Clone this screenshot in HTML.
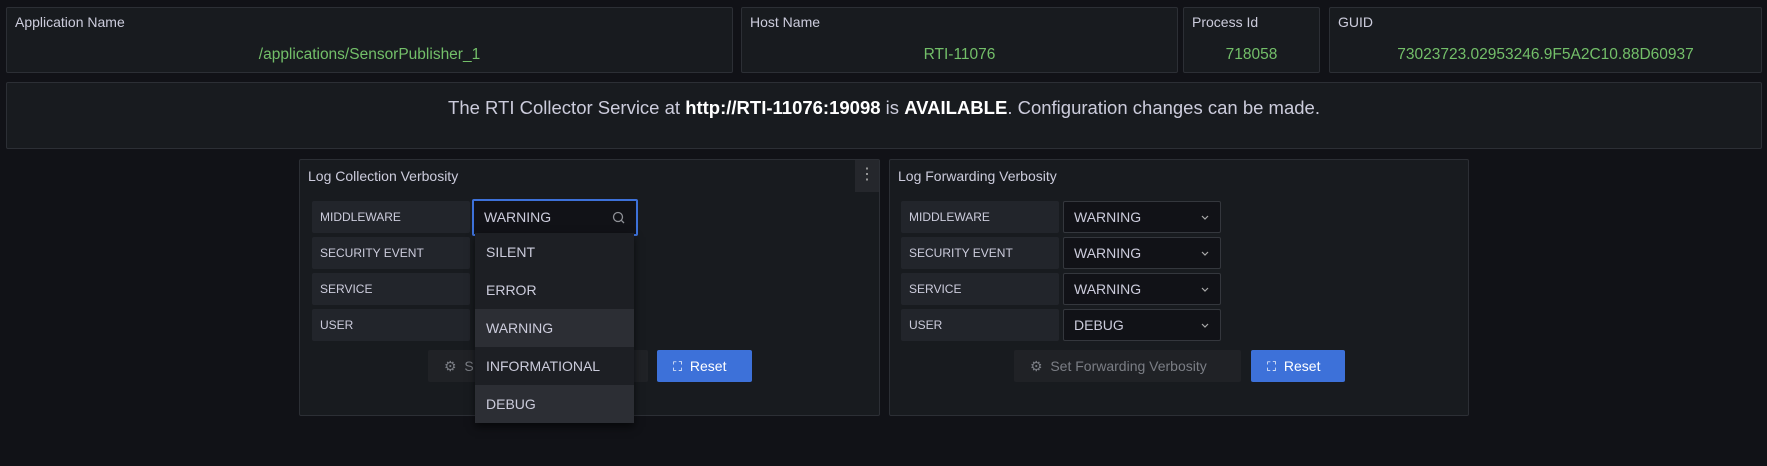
<!DOCTYPE html>
<html><head><meta charset="utf-8"><style>
*{box-sizing:border-box;margin:0;padding:0}
body{width:1767px;height:466px;background:#111217;font-family:"Liberation Sans",sans-serif;color:#ccccdc;position:relative;overflow:hidden}
.p{position:absolute;background:#181b1f;border:1px solid #2c2f35;border-radius:2px}
.t{position:absolute;left:8px;top:6px;font-size:14px;color:#ccccdc;font-weight:500}
.v{position:absolute;left:0;right:0;top:38px;text-align:center;color:#73bf69;font-size:15.5px}
.lab{position:absolute;background:#22252b;border-radius:2px;font-size:12px;color:#ccccdc;padding-left:8px;line-height:32px;width:158px;height:32px}
.sel{position:absolute;background:#111217;border:1px solid #34373d;border-radius:2px;height:32px;width:158px;font-size:14px;color:#ccccdc;padding-left:10px;line-height:30px}
.sel svg{position:absolute;right:10px;top:10px}
.btn{position:absolute;height:32px;border-radius:2px;font-size:14px;line-height:32px}
.g{background:#202226;color:#7b7e85}
.b{background:#3d71d9;color:#fff}
.menu{position:absolute;left:475px;top:233px;width:159px;height:190px;background:#1d1f24;box-shadow:0 4px 8px rgba(0,0,0,.6)}
.mi{height:38px;line-height:38px;padding-left:11px;font-size:14px;color:#ccccdc}
.hi{background:#2c2e34}
</style></head><body>
<div class="p" style="left:6px;top:7px;width:727px;height:66px"><div class="t">Application Name</div><div class="v">/applications/SensorPublisher_1</div></div>
<div class="p" style="left:741px;top:7px;width:437px;height:66px"><div class="t">Host Name</div><div class="v">RTI-11076</div></div>
<div class="p" style="left:1183px;top:7px;width:137px;height:66px"><div class="t">Process Id</div><div class="v">718058</div></div>
<div class="p" style="left:1329px;top:7px;width:433px;height:66px"><div class="t">GUID</div><div class="v">73023723.02953246.9F5A2C10.88D60937</div></div>
<div class="p" style="left:6px;top:82px;width:1756px;height:67px"><div style="position:absolute;left:0;right:0;top:14px;text-align:center;font-size:18.5px;color:#ccccdc">The RTI Collector Service at <b style="color:#fff">http://RTI-11076:19098</b> is <b style="color:#fff">AVAILABLE</b>. Configuration changes can be made.</div></div>

<div class="p" style="left:299px;top:159px;width:581px;height:257px">
<div class="t" style="top:8px">Log Collection Verbosity</div>
<div style="position:absolute;right:0;top:0;width:24px;height:32px;background:#25272c;color:#aaa;text-align:center;line-height:30px;font-size:16px">⋮</div>
</div>
<div class="lab" style="left:312px;top:201px">MIDDLEWARE</div>
<div class="lab" style="left:312px;top:237px">SECURITY EVENT</div>
<div class="lab" style="left:312px;top:273px">SERVICE</div>
<div class="lab" style="left:312px;top:309px">USER</div>
<div class="sel" style="left:472px;top:199px;width:166px;height:37px;border:2px solid #3d71d9;line-height:33px">WARNING<svg width="14" height="14" viewBox="0 0 14 14" style="top:10px"><circle cx="6" cy="6" r="4.5" fill="none" stroke="#8e9096" stroke-width="1.3"/><path d="M9.3 9.3L12 12" stroke="#8e9096" stroke-width="1.3"/></svg></div>
<div class="btn g" style="left:428px;top:350px;width:220px;padding-left:16px"><span style="font-size:14px">⚙</span>&nbsp; S</div>
<div class="btn b" style="left:657px;top:350px;width:95px;padding-left:16px"><span style="font-size:13px">⛶</span>&nbsp; Reset</div>
<div class="menu">
<div class="mi">SILENT</div><div class="mi">ERROR</div><div class="mi hi">WARNING</div><div class="mi">INFORMATIONAL</div><div class="mi hi">DEBUG</div>
</div>

<div class="p" style="left:889px;top:159px;width:580px;height:257px"><div class="t" style="top:8px">Log Forwarding Verbosity</div></div>
<div class="lab" style="left:901px;top:201px">MIDDLEWARE</div>
<div class="lab" style="left:901px;top:237px">SECURITY EVENT</div>
<div class="lab" style="left:901px;top:273px">SERVICE</div>
<div class="lab" style="left:901px;top:309px">USER</div>
<div class="sel" style="left:1063px;top:201px">WARNING<svg width="10" height="10" viewBox="0 0 10 10"><path d="M2 4l3 3 3-3" fill="none" stroke="#aaa" stroke-width="1.2"/></svg></div>
<div class="sel" style="left:1063px;top:237px">WARNING<svg width="10" height="10" viewBox="0 0 10 10"><path d="M2 4l3 3 3-3" fill="none" stroke="#aaa" stroke-width="1.2"/></svg></div>
<div class="sel" style="left:1063px;top:273px">WARNING<svg width="10" height="10" viewBox="0 0 10 10"><path d="M2 4l3 3 3-3" fill="none" stroke="#aaa" stroke-width="1.2"/></svg></div>
<div class="sel" style="left:1063px;top:309px">DEBUG<svg width="10" height="10" viewBox="0 0 10 10"><path d="M2 4l3 3 3-3" fill="none" stroke="#aaa" stroke-width="1.2"/></svg></div>
<div class="btn g" style="left:1014px;top:350px;width:227px;padding-left:16px"><span style="font-size:14px">⚙</span>&nbsp; Set Forwarding Verbosity</div>
<div class="btn b" style="left:1251px;top:350px;width:94px;padding-left:16px"><span style="font-size:13px">⛶</span>&nbsp; Reset</div>
</body></html>
